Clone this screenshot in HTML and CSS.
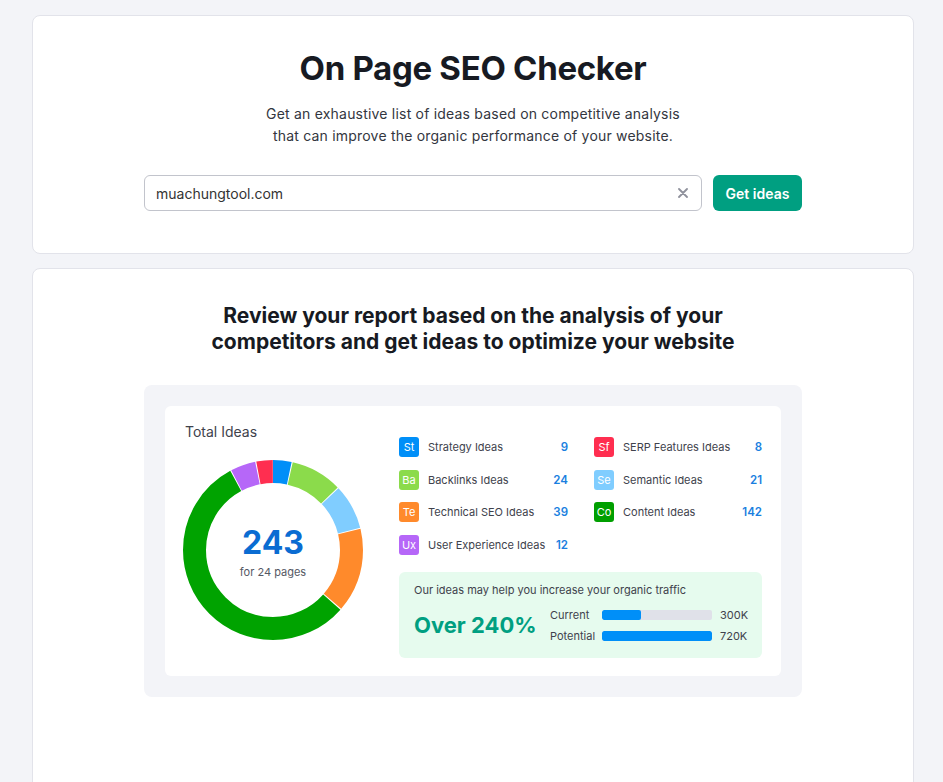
FILE: index.html
```html
<!DOCTYPE html>
<html lang="en">
<head>
<meta charset="utf-8">
<title>On Page SEO Checker</title>
<link rel="stylesheet" href="styles.css">
</head>
<body>
<main class="page">
  <section class="card hero">
    <h1 class="hero-title">On Page SEO Checker</h1>
    <p class="hero-sub">Get an exhaustive list of ideas based on competitive analysis<br>that can improve the organic performance of your website.</p>
    <form class="search">
      <div class="search-field">
        <span class="search-value">muachungtool.com</span>
        <svg class="search-clear" width="10" height="10" viewBox="0 0 10 10"><path d="M1 1L9 9M9 1L1 9" stroke="#8f919c" stroke-width="1.8" stroke-linecap="round"/></svg>
      </div>
      <button type="button" class="btn-primary">Get ideas</button>
    </form>
  </section>

  <section class="card report">
    <h2 class="report-title">Review your report based on the analysis of your<br>competitors and get ideas to optimize your website</h2>
    <div class="panel">
      <div class="panel-inner">
        <div class="total">
          <div class="total-label">Total Ideas</div>
          <div class="donut">
            <svg width="180" height="180" viewBox="0 0 180 180">
              <g transform="rotate(-90 90 90)" fill="none" stroke-width="23">
                <circle cx="90" cy="90" r="78.5" stroke="#008ff8" stroke-dasharray="16.4 493.23" stroke-dashoffset="0"/>
                <circle cx="90" cy="90" r="78.5" stroke="#8bdb4b" stroke-dasharray="45.4 493.23" stroke-dashoffset="-17.41"/>
                <circle cx="90" cy="90" r="78.5" stroke="#80cdff" stroke-dasharray="39.6 493.23" stroke-dashoffset="-63.83"/>
                <circle cx="90" cy="90" r="78.5" stroke="#ff8a2b" stroke-dasharray="74.4 493.23" stroke-dashoffset="-104.45"/>
                <circle cx="90" cy="90" r="78.5" stroke="#00a300" stroke-dasharray="273.7 493.23" stroke-dashoffset="-179.89"/>
                <circle cx="90" cy="90" r="78.5" stroke="#b667f8" stroke-dasharray="22.2 493.23" stroke-dashoffset="-454.55"/>
                <circle cx="90" cy="90" r="78.5" stroke="#ff2e50" stroke-dasharray="14.5 493.23" stroke-dashoffset="-477.76"/>
              </g>
            </svg>
            <div class="donut-center">
              <div class="donut-num">243</div>
              <div class="donut-sub">for 24 pages</div>
            </div>
          </div>
        </div>
        <div class="details">
          <ul class="legend">
            <li class="legend-item"><span class="badge b-st">St</span><span class="legend-name">Strategy Ideas</span><span class="legend-val">9</span></li>
            <li class="legend-item"><span class="badge b-sf">Sf</span><span class="legend-name">SERP Features Ideas</span><span class="legend-val">8</span></li>
            <li class="legend-item"><span class="badge b-ba">Ba</span><span class="legend-name">Backlinks Ideas</span><span class="legend-val">24</span></li>
            <li class="legend-item"><span class="badge b-se">Se</span><span class="legend-name">Semantic Ideas</span><span class="legend-val">21</span></li>
            <li class="legend-item"><span class="badge b-te">Te</span><span class="legend-name">Technical SEO Ideas</span><span class="legend-val">39</span></li>
            <li class="legend-item"><span class="badge b-co">Co</span><span class="legend-name">Content Ideas</span><span class="legend-val">142</span></li>
            <li class="legend-item"><span class="badge b-ux">Ux</span><span class="legend-name">User Experience Ideas</span><span class="legend-val">12</span></li>
          </ul>
          <div class="traffic">
            <div class="traffic-note">Our ideas may help you increase your organic traffic</div>
            <div class="traffic-body">
              <div class="traffic-big">Over 240%</div>
              <div class="bars">
                <div class="bar-row"><span class="bar-label">Current</span><span class="bar"><span class="bar-fill" style="width:35%"></span></span><span class="bar-val">300K</span></div>
                <div class="bar-row"><span class="bar-label">Potential</span><span class="bar"><span class="bar-fill" style="width:100%"></span></span><span class="bar-val">720K</span></div>
              </div>
            </div>
          </div>
        </div>
      </div>
    </div>
  </section>
</main>
</body>
</html>
```

FILE: styles.css
```css
* { box-sizing: border-box; }
html, body { margin: 0; padding: 0; }
body {
  background: #f3f4f8;
  font-family: Inter, "Noto Sans", "Liberation Sans", sans-serif;
  color: #333;
  height: 782px;
  overflow: hidden;
}
.page {
  padding: 15px 29px 0 32px;
  display: flex;
  flex-direction: column;
  gap: 14px;
}
.card {
  background: #fff;
  border: 1px solid #e2e3ea;
  border-radius: 8px;
  display: flex;
  flex-direction: column;
  align-items: center;
}
.hero { padding: 32px 0 42px; }
.hero-title {
  margin: 0;
  font-size: 33px;
  line-height: 40px;
  font-weight: 700;
  color: #171a22;
  letter-spacing: -0.3px;
}
.hero-sub {
  margin: 15px 0 0;
  font-size: 14px;
  line-height: 22px;
  color: #333640;
  text-align: center;
  letter-spacing: 0.2px;
}
.search {
  margin-top: 28px;
  display: flex;
  gap: 11px;
  width: 658px;
}
.search-field {
  flex: 1;
  height: 36px;
  border: 1px solid #c2c4cc;
  border-radius: 6px;
  display: flex;
  align-items: center;
  justify-content: space-between;
  padding: 0 13px 0 11px;
}
.search-value { font-size: 14px; color: #333; }
.btn-primary {
  width: 89px;
  height: 36px;
  border: 0;
  border-radius: 6px;
  background: #009f81;
  color: #fff;
  font-family: inherit;
  font-size: 14px;
  font-weight: 600;
}
.report { padding: 34px 0 120px; }
.report-title {
  margin: 0;
  font-size: 21px;
  line-height: 26px;
  font-weight: 700;
  color: #171a22;
  text-align: center;
}
.panel {
  margin-top: 30px;
  width: 658px;
  background: #f3f4f8;
  border-radius: 8px;
  padding: 21px;
}
.panel-inner {
  background: #fff;
  border-radius: 6px;
  padding: 18px 19px 18px 18px;
  display: flex;
  gap: 36px;
}
.total { width: 180px; }
.total-label {
  margin-left: 2px;
  font-size: 14px;
  line-height: 16px;
  color: #40424c;
}
.donut {
  margin-top: 20px;
  position: relative;
  width: 180px;
  height: 180px;
}
.donut svg { display: block; }
.donut-center {
  position: absolute;
  inset: 0;
  display: flex;
  flex-direction: column;
  align-items: center;
  justify-content: center;
}
.donut-num {
  font-size: 32px;
  line-height: 38px;
  font-weight: 700;
  color: #0a6cd2;
  margin-top: 2px;
}
.donut-sub {
  font-size: 11px;
  line-height: 14px;
  color: #555863;
  margin-top: 3px;
}
.details { flex: 1; padding-top: 13px; }
.legend {
  list-style: none;
  margin: 0;
  padding: 0;
  display: grid;
  grid-template-columns: 169px 168px;
  column-gap: 26px;
  row-gap: 12.5px;
}
.legend-item {
  display: flex;
  align-items: center;
  height: 20px;
}
.badge {
  width: 20px;
  height: 20px;
  border-radius: 3px;
  color: #fff;
  font-size: 11px;
  display: flex;
  align-items: center;
  justify-content: center;
  flex: none;
}
.b-st { background: #008ff8; }
.b-sf { background: #ff2e50; }
.b-ba { background: #8bdb4b; }
.b-se { background: #80cdff; }
.b-te { background: #ff8a2b; }
.b-co { background: #009f00; }
.b-ux { background: #b667f8; }
.legend-name {
  margin-left: 9px;
  font-size: 11px;
  color: #40424c;
  flex: 1;
  white-space: nowrap;
}
.legend-val {
  font-size: 11.5px;
  font-weight: 600;
  color: #1a7fe0;
}
.traffic {
  margin-top: 17px;
  background: #e6fbee;
  border-radius: 6px;
  padding: 11px 14px 15px 15px;
}
.traffic-note {
  font-size: 11px;
  line-height: 14px;
  color: #40424c;
}
.traffic-body {
  margin-top: 11px;
  display: flex;
  align-items: center;
}
.traffic-big {
  width: 136px;
  font-size: 22px;
  font-weight: 700;
  color: #009f81;
}
.bars { flex: 1; display: flex; flex-direction: column; gap: 7px; }
.bar-row {
  display: flex;
  align-items: center;
  height: 14px;
  font-size: 11px;
  color: #40424c;
}
.bar-label { width: 52px; }
.bar {
  width: 110px;
  height: 10px;
  background: #e0e1e9;
  border-radius: 2px;
  overflow: hidden;
}
.bar-fill {
  display: block;
  height: 100%;
  background: #008ff8;
  border-radius: 2px;
}
.bar-val { margin-left: 8px; }
```
